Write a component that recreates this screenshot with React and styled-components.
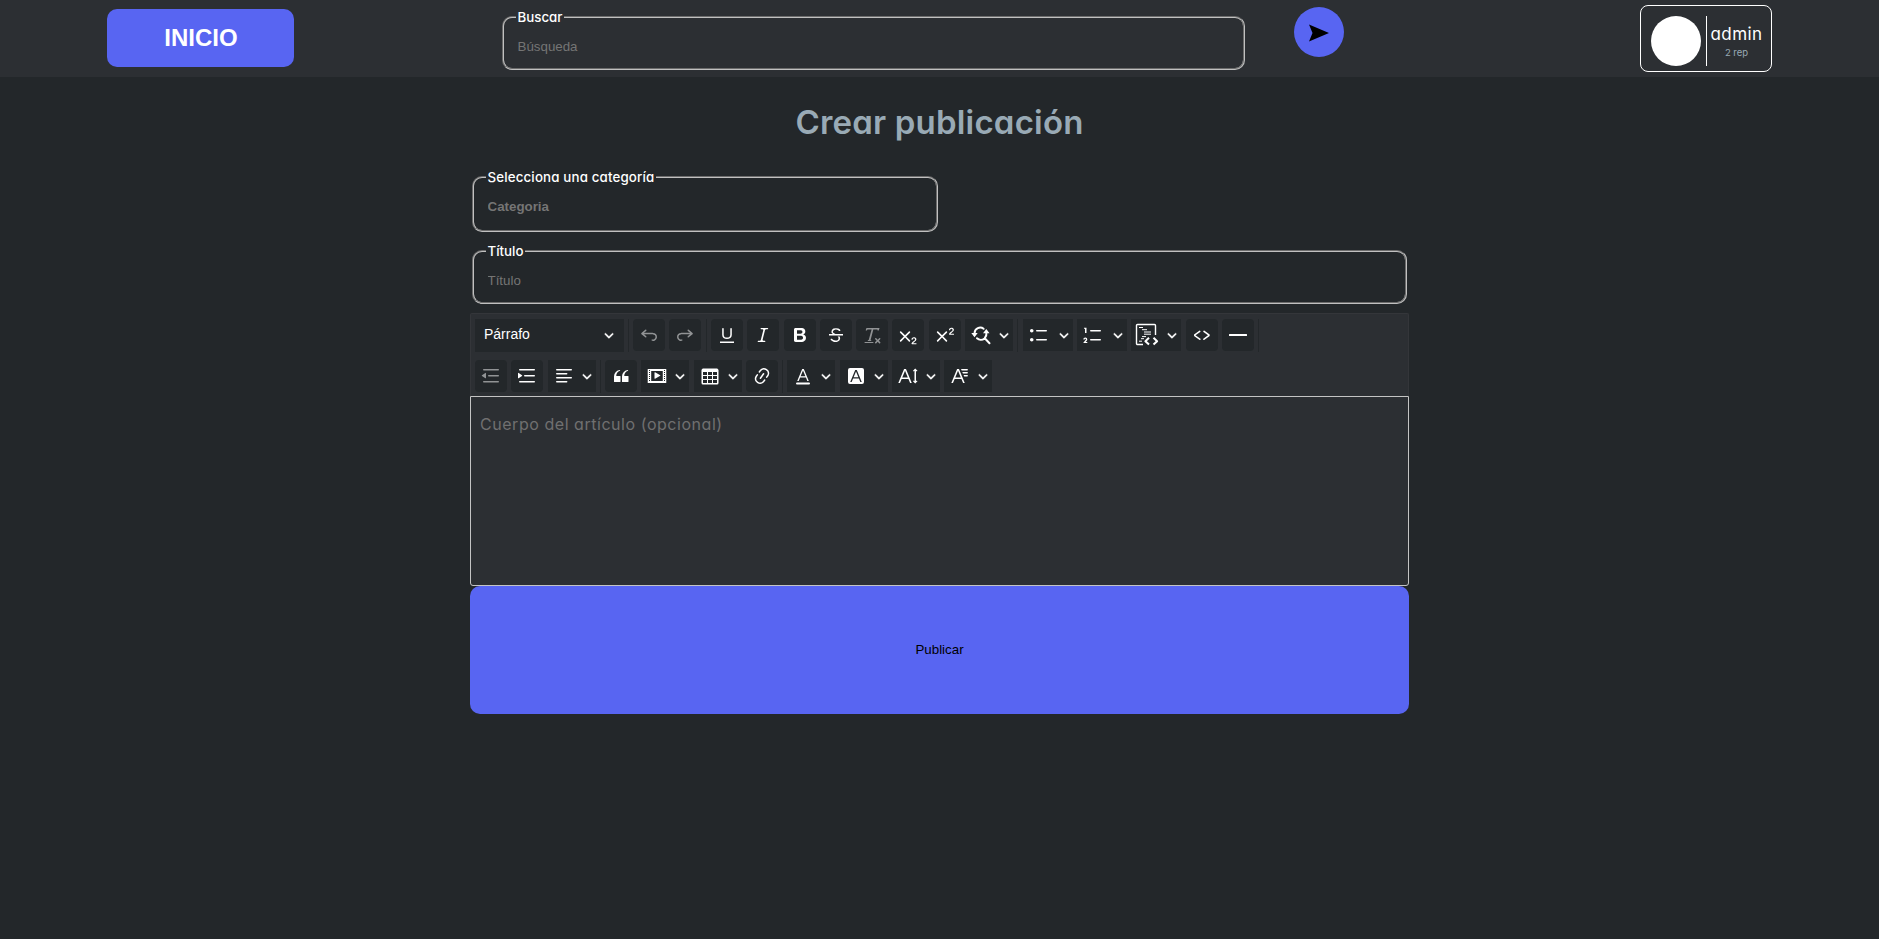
import React from 'react';
import styled, { createGlobalStyle } from 'styled-components';

const GlobalStyle = createGlobalStyle`
  * { box-sizing: border-box; }
  body { margin: 0; background: #23272a; color: #fff; font-family: Inter, sans-serif; font-feature-settings: 'cv11'; }
  button { border: 0; cursor: pointer; padding: 0; }
`;
const Header = styled.header`
  height: 77px;
  background: #2c2f33;
  display: flex;
  align-items: flex-start;
`;
const HomeButton = styled.button`
  width: 187px; height: 58px; margin: 9px 0 0 107px;
  padding-left: 1px;
  border-radius: 10px;
  background: #5865f2; color: #fff;
  font: bold 24px 'Liberation Sans', sans-serif;
`;
const Field = styled.fieldset`
  width: ${p => p.$width}px;
  height: ${p => p.$height}px;
  margin: ${p => p.$margin || '0 2px'};
  padding: 0 13px;
  border: 2px groove #c0c0c0;
  border-radius: 10px;
  display: block;
`;
const Legend = styled.legend`
  padding: 0 2px;
  margin-left: -1.5px;
  font-size: 13.3px;
  line-height: 18px;
  font-weight: 500;
  letter-spacing: ${p => p.$spacing || 0}px;
`;
const Input = styled.input`
  width: 100%;
  height: 20px;
  margin-top: 10px;
  display: block;
  padding: 0 0 0 0.5px; border: 0; outline: 0;
  background: transparent; color: #fff;
  font: ${p => (p.$bold ? 'bold' : 'normal')} 13.333px 'Liberation Sans', sans-serif;
  &::placeholder { color: #757575; opacity: 1; }
`;
const SendButton = styled.button`
  width: 50px; height: 50px; margin: 7px 0 0 49px;
  border-radius: 50%;
  background: #5865f2;
  display: grid; place-items: center;
  padding-top: 2px;
`;
const UserCard = styled.div`
  width: 132px; height: 67px; margin: 5px 0 0 296px;
  padding: 10px 0 0 10px;
  border: 1px solid #fff; border-radius: 8px;
  display: flex;
`;
const Avatar = styled.div`
  width: 50px; height: 50px; border-radius: 50%; background: #fff;
`;
const UserInfo = styled.div`
  width: 60px; height: 50px; margin-left: 5px;
  border-left: 1px solid #fff;
  padding-top: 6px;
  text-align: center;
`;
const UserName = styled.div`
  font-size: 17px; line-height: 24px; letter-spacing: 0.4px;
`;
const Reputation = styled.div`
  font-size: 9.5px; line-height: 14px; color: #99aab5;
`;
const Main = styled.main`
  width: 939px; margin: 0 auto;
`;
const Title = styled.h1`
  margin: 0; padding-top: 21px; height: 91px;
  text-align: center;
  font-size: 33px; line-height: 48px; font-weight: 600;
  letter-spacing: 0.2px;
  color: #99aab5;
`;
const Toolbar = styled.div`
  height: 83px; margin-top: 9px;
  border: 1px solid #34363a; border-bottom: 0; border-radius: 2px 2px 0 0;
  background: #2c2f33;
  padding: 5px 4px 0;
  display: flex; flex-direction: column; gap: 8.5px;
`;
const ToolRow = styled.div`
  display: flex; gap: ${p => p.$gap}px; height: 32.5px;
`;
const Tool = styled.button`
  width: ${p => p.$width || 32}px; height: 32px;
  flex: none;
  padding-left: 6px;
  border-radius: ${p => (p.$square ? 0 : 4)}px;
  background: #23272a;
  color: #fff;
  display: flex; align-items: center;
  justify-content: space-between;
  padding-right: ${p => (p.$square ? 4 : 6)}px;
`;
const Heading = styled(Tool)`
  width: 148.5px; height: 33px; padding: 0 10px 1px 9px;
  font: 14px 'Liberation Sans', sans-serif;
`;
const HeadingLabel = styled.span`
  padding-bottom: 2px;
`;
const Separator = styled.i`
  width: 1px; height: 33px; background: #23272a; flex: none;
`;
const Glyph = styled.svg`
  width: ${p => p.$size || 20}px; height: ${p => p.$size || 20}px;
  display: block; fill: currentColor;
  opacity: ${p => (p.$dim ? 0.5 : 1)};
  overflow: visible;
`;
const Editor = styled.div`
  height: 190px;
  border: 1px solid #c4c4c4; border-radius: 0 0 3px 3px;
  background: #2c2f33;
  padding: 15px 9px;
  font-size: 16px; line-height: 24px; letter-spacing: 0.54px; color: #707070;
`;
const Publish = styled.button`
  display: block; width: 100%; height: 128px;
  padding-bottom: 2px;
  border-radius: 10px;
  background: #5865f2; color: #000;
  font: 13.333px 'Liberation Sans', sans-serif;
`;

const cross = 'm7.03 10.349 3.818-3.819a.8.8 0 1 1 1.132 1.132L8.16 11.48l3.819 3.818a.8.8 0 1 1-1.132 1.132L7.03 12.61l-3.818 3.82a.8.8 0 1 1-1.132-1.132L5.9 11.48 2.08 7.662A.8.8 0 1 1 3.212 6.53l3.818 3.82z';
const two = 'h2.549c.254 0 .447.05.58.152a.49.49 0 0 1 .201.413.54.54 0 0 1-.159.393c-.105.108-.266.162-.48.162h-3.594c-.245 0-.435-.066-.572-.197a.621.621 0 0 1-.205-.463c0-.114.044-.265.132-.453a1.62 1.62 0 0 1 .288-.444c.433-.436.824-.81 1.172-1.122.348-.312.597-.517.747-.615.267-.183.49-.368.667-.553.177-.185.312-.375.405-.57.093-.194.139-.384.139-.57a1.008 1.008 0 0 0-.554-.917 1.197 1.197 0 0 0-.56-.133c-.426 0-.761.182-1.005.546a2.332 2.332 0 0 0-.164.39 1.609 1.609 0 0 1-.258.488c-.096.114-.237.17-.423.17a.558.558 0 0 1-.405-.156.568.568 0 0 1-.161-.427c0-.218.05-.446.151-.683.101-.238.252-.453.452-.646s.454-.349.762-.467a2.998 2.998 0 0 1 1.081-.178c.498 0 .923.076 1.274.228a1.916 1.916 0 0 1 1.004 1.032 1.984 1.984 0 0 1-.156 1.794c-.2.32-.405.572-.613.754-.208.182-.558.468-1.048.857-.49.39-.826.691-1.008.906a2.703 2.703 0 0 0-.24.309z';
const indentLines = 'M2 3.75c0 .414.336.75.75.75h14.5a.75.75 0 1 0 0-1.5H2.75a.75.75 0 0 0-.75.75zm5 6c0 .414.336.75.75.75h9.5a.75.75 0 1 0 0-1.5h-9.5a.75.75 0 0 0-.75.75zM2.75 16.5h14.5a.75.75 0 1 0 0-1.5H2.75a.75.75 0 1 0 0 1.5z';

const icons = {
  undo: 'm5.042 9.367 2.189 1.837a.75.75 0 0 1-.965 1.149l-3.788-3.18a.747.747 0 0 1-.21-.284.75.75 0 0 1 .17-.945L6.23 4.762a.75.75 0 1 1 .964 1.15L4.863 7.866h8.917A.75.75 0 0 1 14 7.9a4 4 0 1 1-1.477 7.718l.344-1.489a2.5 2.5 0 1 0 1.094-4.73l.008-.032H5.042z',
  redo: 'm14.958 9.367-2.189 1.837a.75.75 0 0 0 .965 1.149l3.788-3.18a.747.747 0 0 0 .21-.284.75.75 0 0 0-.17-.945L13.77 4.762a.75.75 0 1 0-.964 1.15l2.331 1.955H6.22A.75.75 0 0 0 6 7.9a4 4 0 1 0 1.477 7.718l-.344-1.489A2.5 2.5 0 1 1 6.039 9.4l-.008-.032h8.927z',
  underline: 'M3 18v-1.5h14V18zm2.2-8V3.6c0-.4.4-.6.8-.6.3 0 .7.2.7.6v6.2c0 2 1.3 2.8 3.2 2.8 1.9 0 3.4-.9 3.4-2.9V3.6c0-.3.4-.5.8-.5.3 0 .7.2.7.5V10c0 2.7-2.2 4-4.9 4-2.6 0-4.7-1.2-4.7-4z',
  italic: 'm9.586 14.633.021.004c-.036.335.095.655.393.962.082.083.173.15.274.201h1.474a.6.6 0 1 1 0 1.2H5.304a.6.6 0 0 1 0-1.2h1.15c.474-.07.809-.182 1.005-.334.157-.122.291-.32.404-.597l2.416-9.55a1.053 1.053 0 0 0-.281-.823 1.12 1.12 0 0 0-.442-.296H8.15a.6.6 0 0 1 0-1.2h6.443a.6.6 0 1 1 0 1.2h-1.195c-.376.056-.65.155-.823.296-.215.175-.423.439-.623.79l-2.366 9.347z',
  bold: 'M10.187 17H5.773c-.637 0-1.092-.138-1.364-.415-.273-.277-.409-.718-.409-1.323V4.738c0-.617.14-1.062.419-1.332.279-.27.73-.406 1.354-.406h4.68c.69 0 1.288.041 1.793.124.506.083.96.242 1.36.478.341.197.644.447.906.75a3.262 3.262 0 0 1 .808 2.162c0 1.401-.722 2.426-2.167 3.075C15.05 10.175 16 11.315 16 13.01a3.756 3.756 0 0 1-2.296 3.504 6.1 6.1 0 0 1-1.517.377c-.571.073-1.238.11-2 .11zm-.217-6.217H7v4.087h3.069c1.977 0 2.965-.69 2.965-2.072 0-.707-.256-1.22-.768-1.537-.512-.319-1.277-.478-2.296-.478zM7 5.13v3.619h2.606c.729 0 1.292-.067 1.69-.2a1.6 1.6 0 0 0 .91-.765c.165-.267.247-.566.247-.897 0-.707-.26-1.176-.778-1.409-.519-.232-1.31-.348-2.375-.348H7z',
  strike: 'M7 16.4c-.8-.4-1.5-.9-2.2-1.5a.6.6 0 0 1-.2-.5l.3-.6h1c1 1.2 2.1 1.7 3.7 1.7 1 0 1.8-.3 2.3-.6.6-.4.6-1.2.6-1.3.2-1.2-.9-2.1-.9-2.1h2.1c.3.7.4 1.2.4 1.7v.8l-.6 1.2c-.6.8-1.1 1-1.6 1.2a6 6 0 0 1-2.4.6c-1 0-1.8-.3-2.5-.6zM6.8 9 6 8.3c-.4-.5-.5-.8-.5-1.6 0-.7.1-1.3.5-1.8.4-.6 1-1 1.6-1.3a6.3 6.3 0 0 1 4.7 0 4 4 0 0 1 1.7 1l.3.7c0 .1.2.4-.2.7-.4.2-.9.1-1 0a3 3 0 0 0-1.2-1c-.4-.2-1-.3-2-.4-.7 0-1.4.2-2 .6-.8.6-1 .8-1 1.5 0 .8.5 1 1.2 1.5.6.4 1.1.7 1.9 1H6.8zM3 10.5V9h14v1.5z',
  clear: 'M8.69 14.915c.053.052.173.083.36.093a.366.366 0 0 1 .345.485l-.003.01a.738.738 0 0 1-.697.497h-2.67a.374.374 0 0 1-.353-.496l.013-.038a.681.681 0 0 1 .644-.458c.197-.012.325-.043.386-.093a.28.28 0 0 0 .072-.11L9.592 4.5H6.269c-.359-.017-.609.013-.75.09-.142.078-.289.265-.442.563-.192.29-.516.464-.864.464H4.17a.43.43 0 0 1-.407-.569L4.46 3h13.08l-.62 2.043a.81.81 0 0 1-.775.574h-.114a.486.486 0 0 1-.486-.486c.001-.284-.054-.464-.167-.54-.112-.076-.367-.106-.766-.091h-3.28l-2.68 10.257c-.006.074.007.127.038.158zM3 17h8a.5.5 0 1 1 0 1H3a.5.5 0 1 1 0-1zm11.299 1.17a.75.75 0 1 1-1.06-1.06l1.414-1.415-1.415-1.414a.75.75 0 0 1 1.06-1.06l1.415 1.414 1.414-1.415a.75.75 0 1 1 1.06 1.06l-1.413 1.415 1.414 1.415a.75.75 0 0 1-1.06 1.06l-1.415-1.414-1.414 1.414z',
  sub: cross + 'M15.177 18.178' + two,
  sup: cross + 'M15.677 8.678' + two,
  bullets: 'M7 5.75c0 .414.336.75.75.75h9.5a.75.75 0 1 0 0-1.5h-9.5a.75.75 0 0 0-.75.75zm-6 0C1 4.784 1.777 4 2.75 4c.966 0 1.75.777 1.75 1.75 0 .966-.777 1.75-1.75 1.75C1.784 7.5 1 6.723 1 5.75zm6 9c0 .414.336.75.75.75h9.5a.75.75 0 1 0 0-1.5h-9.5a.75.75 0 0 0-.75.75zm-6 0c0-.966.777-1.75 1.75-1.75.966 0 1.75.777 1.75 1.75 0 .966-.777 1.75-1.75 1.75-.966 0-1.75-.777-1.75-1.75z',
  numbers: 'M7 5.75c0 .414.336.75.75.75h9.5a.75.75 0 1 0 0-1.5h-9.5a.75.75 0 0 0-.75.75zM3.5 3v5H2V3.7H1v-1h2.5V3zM.343 17.857l2.59-3.257H2.92a.6.6 0 1 0-1.04 0H.302a2 2 0 1 1 3.995 0h-.001c-.048.405-.16.734-.333.988-.175.254-.59.692-1.244 1.312H4.3v1h-4l.043-.043zM7 14.75a.75.75 0 0 1 .75-.75h9.5a.75.75 0 1 1 0 1.5h-9.5a.75.75 0 0 1-.75-.75z',
  source: 'm12.5 5.7 5.2 3.9v1.3l-5.6 4c-.1.2-.3.2-.5.2-.3-.1-.6-.7-.6-1l.3-.4 4.7-3.5L11.5 7l-.2-.2c-.1-.3-.1-.6 0-.8.2-.2.5-.4.8-.4a.8.8 0 0 1 .4.1zm-5.2 0L2 9.6v1.3l5.6 4c.1.2.3.2.5.2.3-.1.7-.7.6-1 0-.1 0-.3-.2-.4l-5-3.5L8.2 7l.2-.2c.1-.3.1-.6 0-.8-.2-.2-.5-.4-.8-.4a.8.8 0 0 0-.3.1z',
  line: 'M1.5 9h17a.5.5 0 0 1 .5.5v1a.5.5 0 0 1-.5.5h-17a.5.5 0 0 1-.5-.5v-1a.5.5 0 0 1 .5-.5z',
  outdent: indentLines + 'M4.368 6.95.98 9.358a.4.4 0 0 0 .013.661l3.39 2.207A.4.4 0 0 0 5 11.892V7.275a.4.4 0 0 0-.632-.326z',
  indent: indentLines + 'M1.632 6.95 5.02 9.358a.4.4 0 0 1-.013.661l-3.39 2.207A.4.4 0 0 1 1 11.892V7.275a.4.4 0 0 1 .632-.326z',
  align: 'M2 3.75c0 .414.336.75.75.75h14.5a.75.75 0 1 0 0-1.5H2.75a.75.75 0 0 0-.75.75zm0 8c0 .414.336.75.75.75h14.5a.75.75 0 1 0 0-1.5H2.75a.75.75 0 0 0-.75.75zm0 4c0 .414.336.75.75.75h9.929a.75.75 0 1 0 0-1.5H2.75a.75.75 0 0 0-.75.75zm0-8c0 .414.336.75.75.75h9.929a.75.75 0 1 0 0-1.5H2.75a.75.75 0 0 0-.75.75z',
  quote: 'M3 10.423a6.5 6.5 0 0 1 6.056-6.408l.038.67C6.448 5.423 5.354 7.663 5.22 10H9c.552 0 .5.432.5.986v4.511c0 .554-.448.503-1 .503h-5c-.552 0-.5-.449-.5-1.003v-4.574zm8 0a6.5 6.5 0 0 1 6.056-6.408l.038.67c-2.646.739-3.74 2.979-3.873 5.315H17c.552 0 .5.432.5.986v4.511c0 .554-.448.503-1 .503h-5c-.552 0-.5-.449-.5-1.003v-4.574z',
  media: 'M18.68 3.03c.6 0 .59-.03.59.55v12.84c0 .59.01.56-.59.56H1.29c-.6 0-.59.03-.59-.56V3.58c0-.58-.01-.55.6-.55h17.38zM15.77 15V5H4.2v10h11.57zM2 4v1h1V4H2zm0 2v1h1V6H2zm0 2v1h1V8H2zm0 2v1h1v-1H2zm0 2v1h1v-1H2zm0 2v1h1v-1H2zM17 4v1h1V4h-1zm0 2v1h1V6h-1zm0 2v1h1V8h-1zm0 2v1h1v-1h-1zm0 2v1h1v-1h-1zm0 2v1h1v-1h-1zM7.5 6.677a.4.4 0 0 1 .593-.351l5.133 2.824a.4.4 0 0 1 0 .7l-5.133 2.824a.4.4 0 0 1-.593-.35V6.676z',
  table: 'M3 6v3h4V6H3zm0 4v3h4v-3H3zm0 4v3h4v-3H3zm5 3h4v-3H8v3zm5 0h4v-3h-4v3zm4-4v-3h-4v3h4zm0-4V6h-4v3h4zm1.5 8a1.5 1.5 0 0 1-1.5 1.5H3A1.5 1.5 0 0 1 1.5 17V4c.222-.863 1.068-1.5 2-1.5h13c.932 0 1.778.637 2 1.5v13zM12 13v-3H8v3h4zm0-4V6H8v3h4z',
  link: 'm11.077 15 .991-1.416a.75.75 0 1 1 1.229.86l-1.148 1.64a.748.748 0 0 1-.217.206 5.251 5.251 0 0 1-8.503-5.955.741.741 0 0 1 .12-.274l1.147-1.639a.75.75 0 1 1 1.228.86L4.933 10.7l.006.003a3.75 3.75 0 0 0 6.132 4.294l.006.004zm5.494-5.335a.748.748 0 0 1-.12.274l-1.147 1.639a.75.75 0 1 1-1.228-.86l.86-1.23a3.75 3.75 0 0 0-6.144-4.301l-.86 1.229a.75.75 0 0 1-1.229-.86l1.148-1.64a.748.748 0 0 1 .217-.206 5.251 5.251 0 0 1 8.503 5.955zm-4.563-2.532a.75.75 0 0 1 .184 1.045l-3.155 4.505a.75.75 0 1 1-1.229-.86l3.155-4.506a.75.75 0 0 1 1.045-.184z',
  color: 'M12.4 10.3 10 4.5l-2.4 5.8h4.8zm.5 1.2H7.1L5.7 15H4.2l5-12h1.6l5 12h-1.5L13 11.5zm3.1 7H4a1 1 0 0 1 0-2h12a1 1 0 0 1 0 2z',
  background: 'M4 2h12a2 2 0 0 1 2 2v12a2 2 0 0 1-2 2H4a2 2 0 0 1-2-2V4a2 2 0 0 1 2-2zm8.38 9.262H7.62L10 5.506l2.38 5.756zm.532 1.285L14.34 16h1.426L10.804 4H9.196L4.234 16H5.66l1.428-3.453h5.824z',
  size: 'M9.816 11.5 7.038 4.785 4.261 11.5h5.555zm.62 1.5H3.641l-1.666 4.028H.312l5.789-14h1.875l5.789 14h-1.663L10.436 13zm7.55 2.279.779-.779.707.707-2.265 2.265-2.193-2.265.707-.707.765.765V4.825c0-.042 0-.083.002-.123l-.77.77-.707-.707L17.207 2.5l2.265 2.265-.707.707-.782-.782c.002.043.003.089.003.135v10.454z',
  family: 'M11.03 3h6.149a.75.75 0 1 1 0 1.5h-5.514L11.03 3zm1.27 3h4.879a.75.75 0 1 1 0 1.5h-4.244L12.3 6zm1.27 3h3.609a.75.75 0 1 1 0 1.5h-2.973L13.57 9zm-2.754 2.5L8.038 4.785 5.261 11.5h5.555zm.62 1.5H4.641l-1.666 4.028H1.312l5.789-14h1.875l5.789 14h-1.663L11.436 13z',
};

const FindIcon = () => (
  <Glyph viewBox="0 0 20 20" aria-hidden="true">
    <g fill="none" stroke="currentColor" strokeWidth="2" strokeLinecap="round">
      <path d="M3.6 8A5.600 5.600 0 0 1 12.600 3.800M6 13.200a5.600 5.600 0 0 0 7.500.2M15.400 8a6 6 0 0 1-1.600 5M14 13.500l4.500 4.700" />
    </g>
    <path d="m.3 8 3.200 4.200L6.700 8zM12 8.200l3.300-4.200 3.200 4.200z" />
  </Glyph>
);
const SnippetIcon = () => (
  <Glyph viewBox="0 0 20 20" aria-hidden="true">
    <g fill="none" stroke="currentColor" strokeWidth="1.4" strokeLinejoin="round">
      <path d="M6 19.500H0.5a1 1 0 0 1-1-1V.5a1 1 0 0 1 1-1H17.500a1 1 0 0 1 1 1v9.500" />
      <path d="M2 2.500h4M5 4.700h5M7 7h7M7 9.200h7M5 11.600h4M4 13.700h3M2 16.200h3" strokeWidth="1" />
      <path d="m12 12.800-3.600 3.400 3.600 3.400M16.500 12.800l3.600 3.400-3.600 3.400" strokeWidth="2" />
    </g>
  </Glyph>
);
const Icon = ({ name, dim }) => {
  if (name === 'find') return <FindIcon />;
  if (name === 'snippet') return <SnippetIcon />;
  return <Glyph viewBox="0 0 20 20" $dim={dim} aria-hidden="true"><path fillRule={name === 'media' ? 'evenodd' : undefined} d={icons[name]} /></Glyph>;
};
const Chevron = () => (
  <Glyph $size={10} viewBox="0 0 10 10" aria-hidden="true">
    <path stroke="currentColor" strokeWidth="0.300" d="M.941 4.523a.75.75 0 1 1 1.06-1.06l3.006 3.005 3.005-3.005a.75.75 0 1 1 1.06 1.06l-3.549 3.55a.75.75 0 0 1-1.168-.136L.941 4.523z" />
  </Glyph>
);

const rowOne = ['|', ['undo', 0, 1], ['redo', 0, 1], '|', ['underline'], ['italic'], ['bold'], ['strike'], ['clear', 0, 1], ['sub'], ['sup'], ['find', 48], '|', ['bullets', 50], ['numbers', 50], ['snippet', 50], ['source'], ['line'], '|'];
const rowTwo = [['outdent', 0, 1], ['indent'], ['align', 48], '|', ['quote'], ['media', 48], ['table', 48], ['link'], '|', ['color', 48], ['background', 48], ['size', 48], ['family', 48]];

const Tools = ({ items }) => items.map((item, i) => {
  if (item === '|') return <Separator key={i} />;
  const [name, wide, dim] = item;
  return (
    <Tool key={i} $width={wide} $square={!!wide} aria-label={name}>
      <Icon name={name} dim={dim} />
      {wide ? <Chevron /> : null}
    </Tool>
  );
});

export default function App() {
  return (
    <>
      <GlobalStyle />
      <Header>
        <HomeButton>INICIO</HomeButton>
        <Field $width={743} $height={62} $margin="8px 0 0 208px">
          <Legend>Buscar</Legend>
          <Input placeholder="Búsqueda" />
        </Field>
        <SendButton aria-label="Enviar">
          <svg width="20" height="18" viewBox="0 0 20 18"><path d="M0 .5 20 9 0 17.500 3.500 9z" /></svg>
        </SendButton>
        <UserCard>
          <Avatar />
          <UserInfo>
            <UserName>admin</UserName>
            <Reputation>2 rep</Reputation>
          </UserInfo>
        </UserCard>
      </Header>
      <Main>
        <Title>Crear publicación</Title>
        <Field $width={466} $height={64}>
          <Legend $spacing={0.16}>Selecciona una categoría</Legend>
          <Input $bold placeholder="Categoria" />
        </Field>
        <Field $width={935} $height={62} $margin="10px 2px 0">
          <Legend>Título</Legend>
          <Input placeholder="Título" />
        </Field>
        <Toolbar>
          <ToolRow $gap={4.3}>
            <Heading $square><HeadingLabel>Párrafo</HeadingLabel><Chevron /></Heading>
            <Tools items={rowOne} />
          </ToolRow>
          <ToolRow $gap={4.27}><Tools items={rowTwo} /></ToolRow>
        </Toolbar>
        <Editor>Cuerpo del artículo (opcional)</Editor>
        <Publish>Publicar</Publish>
      </Main>
    </>
  );
}
